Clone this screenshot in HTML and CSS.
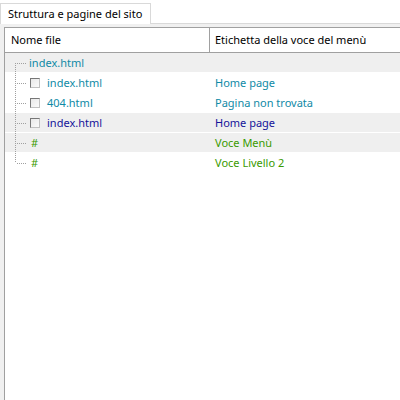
FILE: index.html
```html
<!DOCTYPE html>
<html>
<head>
<meta charset="utf-8">
<link rel="stylesheet" href="styles.css">
</head>
<body>
<div class="tabs">
  <div class="tab">Struttura e pagine del sito</div>
</div>
<div class="panel">
  <div class="list">
    <div class="header">
      <div class="col1 hcell">Nome file</div>
      <div class="col2 hcell">Etichetta della voce del menù</div>
    </div>
    <div class="row shade">
      <div class="col1"><span class="branch first"></span><span class="name teal">index.html</span></div>
      <div class="col2"></div>
    </div>
    <div class="row">
      <div class="col1"><span class="branch"></span><span class="check"></span><span class="name teal">index.html</span></div>
      <div class="col2 teal">Home page</div>
    </div>
    <div class="row">
      <div class="col1"><span class="branch"></span><span class="check"></span><span class="name teal">404.html</span></div>
      <div class="col2 teal">Pagina non trovata</div>
    </div>
    <div class="row shade">
      <div class="col1"><span class="branch"></span><span class="check"></span><span class="name navy">index.html</span></div>
      <div class="col2 navy">Home page</div>
    </div>
    <div class="row shade">
      <div class="col1"><span class="branch"></span><span class="hash green">#</span></div>
      <div class="col2 green">Voce Menù</div>
    </div>
    <div class="row">
      <div class="col1"><span class="branch last"></span><span class="hash green">#</span></div>
      <div class="col2 green">Voce Livello 2</div>
    </div>
  </div>
</div>
</body>
</html>
```
FILE: styles.css
```css
html, body {
  margin: 0;
  padding: 0;
  width: 400px;
  height: 400px;
  overflow: hidden;
  background: #ffffff;
  font-family: "Noto Sans", "Open Sans", sans-serif;
  font-size: 11px;
  color: #000;
}
.tabs {
  height: 23px;
  padding-top: 3px;
  box-sizing: border-box;
  display: flex;
}
.tab {
  width: 151px;
  height: 21px;
  box-sizing: border-box;
  border: 1px solid #d9d9d9;
  border-bottom: none;
  background: #ffffff;
  padding-left: 7px;
  line-height: 19px;
  white-space: nowrap;
}
.panel {
  border-top: 1px solid #d9d9d9;
  background: #f0f0f0;
  padding: 3px 0 0 4px;
  height: 377px;
  box-sizing: border-box;
}
.list {
  background: #ffffff;
  border-left: 1px solid #a0a0a0;
  border-top: 1px solid #a0a0a0;
  height: 100%;
  box-sizing: border-box;
}
.header {
  display: flex;
  height: 25px;
  border-bottom: 1px solid #a0a0a0;
  box-sizing: border-box;
}
.hcell {
  line-height: 24px;
}
.header .col1 {
  padding-left: 6px;
  border-right: 1px solid #a0a0a0;
}
.col1 {
  width: 205px;
  flex: none;
  display: flex;
  align-items: center;
  box-sizing: border-box;
}
.col2 {
  padding-left: 5px;
  flex: 1;
  white-space: nowrap;
}
.row {
  display: flex;
  height: 20px;
  line-height: 19px;
  border-bottom: 1px solid #ffffff;
  box-sizing: border-box;
}
.row.shade {
  background: #efefef;
}
.row .col1 {
  height: 19px;
}
.branch {
  position: relative;
  width: 11px;
  height: 20px;
  margin-left: 10px;
  flex: none;
  align-self: flex-start;
}
.branch::before {
  content: "";
  position: absolute;
  left: 0;
  top: 0;
  width: 1px;
  height: 20px;
  background: repeating-linear-gradient(to bottom, #a0a0a0 0 1px, transparent 1px 2px);
}
.branch.first::before {
  top: 10px;
  height: 10px;
}
.branch.last::before {
  height: 10px;
}
.branch::after {
  content: "";
  position: absolute;
  left: 1px;
  top: 10px;
  width: 10px;
  height: 1px;
  background: repeating-linear-gradient(to right, transparent 0 1px, #a0a0a0 1px 2px);
}
.name {
  margin-left: 3px;
}
.check {
  width: 10px;
  height: 10px;
  box-sizing: border-box;
  margin-left: 4px;
  margin-right: 7px;
  border: 1px solid #c0c0c0;
  border-top-color: #777777;
  border-left-color: #777777;
  background: linear-gradient(135deg, #e8e8e8, #fafafa);
  flex: none;
}
.check + .name {
  margin-left: 0;
}
.hash {
  margin-left: 5px;
}
.teal { color: #0f8aa6; }
.navy { color: #14149a; }
.green { color: #3a9a00; }
```
